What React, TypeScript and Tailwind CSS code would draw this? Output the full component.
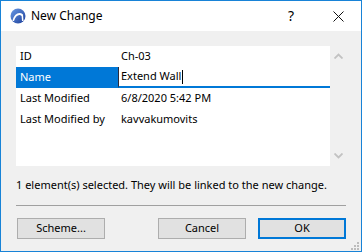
import React from "react";

const font = { fontFamily: '"Segoe UI", "Noto Sans", "Open Sans", sans-serif' };

function AppIcon() {
  return (
    <svg width="16" height="16" viewBox="0 0 16 16">
      <defs>
        <linearGradient id="g" x1="0" y1="0" x2="1" y2="1">
          <stop offset="0" stopColor="#6a9ae6" />
          <stop offset="1" stopColor="#1d3f9a" />
        </linearGradient>
      </defs>
      <circle cx="8" cy="8" r="7.5" fill="url(#g)" />
      <path d="M2.5 13 C4 6 9 3 13 6.5 L13.5 13 L12 13 L11.6 8 C9 5.5 5.5 8 4 13 Z" fill="#fff" />
    </svg>
  );
}

function Chevron({ up }: { up?: boolean }) {
  return (
    <svg width="9" height="6" viewBox="0 0 9 6">
      <path
        d={up ? "M0.5 5.5 L4.5 1.5 L8.5 5.5" : "M0.5 0.5 L4.5 4.5 L8.5 0.5"}
        fill="none"
        stroke="#c2c2c2"
        strokeWidth="1.8"
      />
    </svg>
  );
}

const rows = [
  { label: "ID", value: "Ch-03" },
  { label: "Name", value: "Extend Wall", editing: true },
  { label: "Last Modified", value: "6/8/2020 5:42 PM" },
  { label: "Last Modified by", value: "kavvakumovits" },
];

export default function App() {
  return (
    <div
      className="w-[362px] h-[252px] flex flex-col border border-[#1883d7] bg-[#f0f0f0] text-[11px] text-black overflow-hidden relative"
      style={font}
    >
      <div className="h-[30px] bg-white flex items-center pl-[9px] shrink-0">
        <AppIcon />
        <span className="ml-[5px] text-[12px] leading-none">New Change</span>
        <span className="ml-auto mr-[39px] text-[14px] leading-none">?</span>
        <svg width="11" height="11" viewBox="0 0 11 11" className="mr-[17px]">
          <path d="M0.5 0.5 L10.5 10.5 M10.5 0.5 L0.5 10.5" stroke="#111" strokeWidth="1" />
        </svg>
      </div>

      <div className="px-[15px] pt-[15px] flex flex-col">
        <div className="flex">
          <div className="w-[314px] h-[120px] bg-white flex flex-col">
            {rows.map((r) => (
              <div key={r.label} className="h-[21px] flex items-stretch">
                <div
                  className={
                    r.editing
                      ? "w-[102px] bg-[#0078d7] text-white pl-[4px] flex items-center"
                      : "w-[102px] pl-[4px] flex items-center"
                  }
                >
                  {r.label}
                </div>
                {r.editing ? (
                  <div className="flex-1 flex items-center pl-[2px] border-l border-[#2a2a3a] border-b-2 border-b-[#0078d7]">
                    <span>{r.value}</span>
                    <span className="w-px h-[14px] bg-black ml-px" />
                  </div>
                ) : (
                  <div className="flex-1 flex items-center pl-[3px]">{r.value}</div>
                )}
              </div>
            ))}
          </div>
          <div className="w-[16px] h-[120px] flex flex-col items-center justify-between py-[7px]">
            <Chevron up />
            <Chevron />
          </div>
        </div>

        <div className="mt-[11px] h-[16px] flex items-center whitespace-nowrap">
          1 element(s) selected. They will be linked to the new change.
        </div>

        <div className="mt-[12px] h-px bg-[#a0a0a0]" />

        <div className="mt-[12px] flex items-center">
          <button className="ml-px w-[88px] h-[21px] bg-[#e1e1e1] border border-[#adadad] flex items-center justify-center">
            Scheme...
          </button>
          <button className="ml-auto w-[88px] h-[21px] bg-[#e1e1e1] border border-[#adadad] flex items-center justify-center">
            Cancel
          </button>
          <button className="ml-[12px] w-[88px] h-[21px] bg-[#e1e1e1] border-2 border-[#0078d7] flex items-center justify-center">
            OK
          </button>
        </div>
      </div>

      <svg width="8" height="8" viewBox="0 0 8 8" className="absolute right-[2px] bottom-[1px]">
        <rect x="6" y="0" width="2" height="2" fill="#bcbcbc" />
        <rect x="3" y="3" width="2" height="2" fill="#bcbcbc" />
        <rect x="6" y="3" width="2" height="2" fill="#bcbcbc" />
        <rect x="0" y="6" width="2" height="2" fill="#bcbcbc" />
        <rect x="3" y="6" width="2" height="2" fill="#bcbcbc" />
        <rect x="6" y="6" width="2" height="2" fill="#bcbcbc" />
      </svg>
    </div>
  );
}
